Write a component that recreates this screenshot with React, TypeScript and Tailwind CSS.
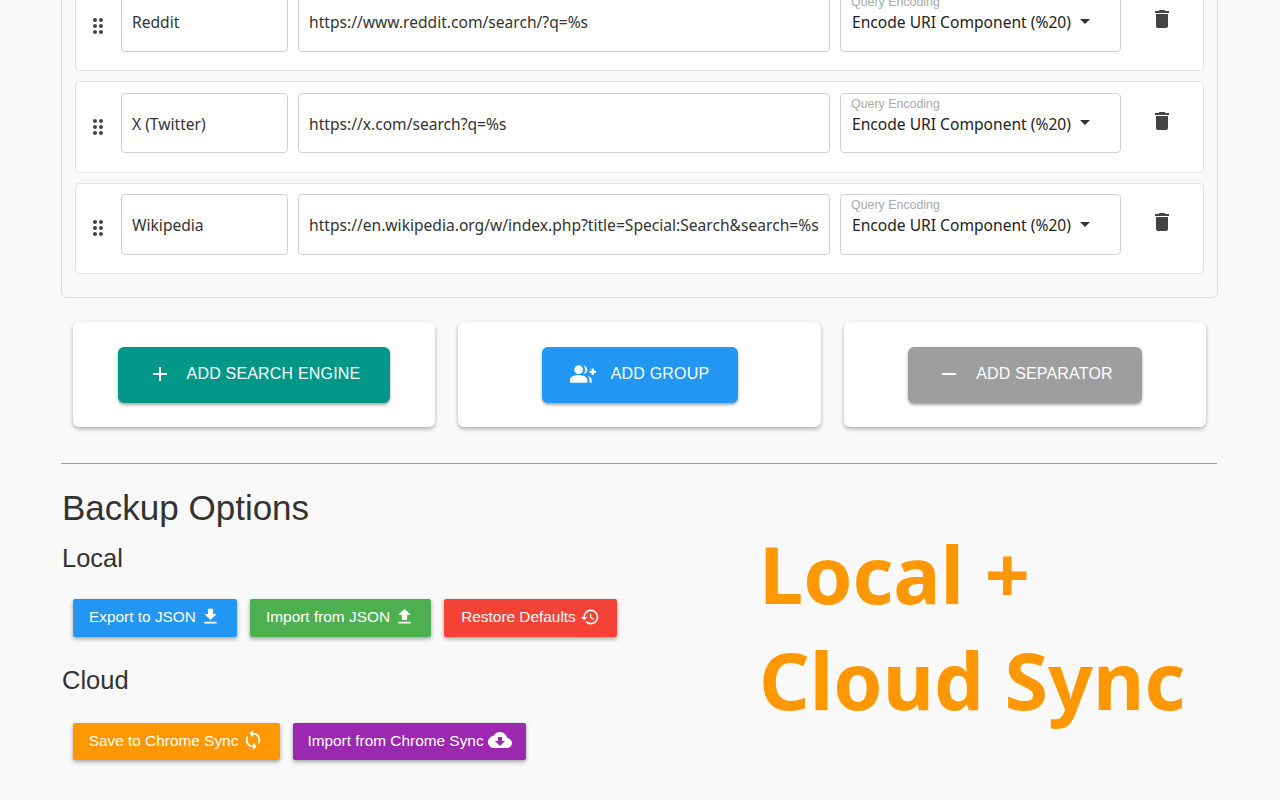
import React from "react";
import {
  MdAdd,
  MdCloudDownload,
  MdDelete,
  MdDragIndicator,
  MdFileDownload,
  MdFileUpload,
  MdGroupAdd,
  MdHistory,
  MdRemove,
  MdSync,
} from "react-icons/md";

const engines = [
  { name: "Reddit", url: "https://www.reddit.com/search/?q=%s" },
  { name: "X (Twitter)", url: "https://x.com/search?q=%s" },
  {
    name: "Wikipedia",
    url: "https://en.wikipedia.org/w/index.php?title=Special:Search&search=%s",
  },
];

const EngineRow = ({ name, url }: { name: string; url: string }) => (
  <div className="flex h-[91.4px] items-start rounded-[4px] border border-[#e4e4e4] bg-white pt-[10.5px] pl-[10px]">
    <div className="flex h-[60.5px] w-[35px] shrink-0 items-center pt-[8px]">
      <MdDragIndicator className="h-[24px] w-[24px] text-[#444]" />
    </div>
    <div className="flex h-[60.5px] w-[167px] shrink-0 items-center rounded-[4px] border border-[#d0d0d0] pt-[3.2px] pl-[10px] text-[15.6px] text-[#333]">
      {name}
    </div>
    <div className="ml-[10px] flex h-[60.5px] w-[532px] shrink-0 items-center rounded-[4px] border border-[#d0d0d0] pt-[3.2px] pl-[10px] text-[15.6px] whitespace-nowrap text-[#333]">
      {url}
    </div>
    <div className="ml-[10px] h-[60.5px] w-[281px] shrink-0 rounded-[4px] border border-[#d0d0d0] pt-[3px] pl-[10px]">
      <div className="font-['Liberation_Sans',sans-serif] text-[12.4px] leading-[14px] text-[#aaa]">Query Encoding</div>
      <div className="mt-[1px] flex items-center pl-[1px] text-[15.6px] leading-[24px] text-[#222]">
        Encode URI Component (%20)
        <span className="ml-[9px] h-0 w-0 -translate-y-[1px] border-x-[5.5px] border-t-[5.5px] border-x-transparent border-t-[#333]" />
      </div>
    </div>
    <MdDelete className="ml-[29px] mt-[15.9px] h-[24px] w-[24px] shrink-0 text-[#444]" />
  </div>
);

const AddCard = ({
  icon,
  label,
  color,
  width,
  className,
}: {
  icon: React.ReactNode;
  label: string;
  color: string;
  width: string;
  className: string;
}) => (
  <div className={`flex h-[105px] items-center justify-center rounded-[6px] bg-white shadow-[0_2px_4px_rgba(0,0,0,0.3)] ${className}`}>
    <div className={`flex h-[56px] items-center justify-center gap-[15px] rounded-[6px] pb-[2px] text-[16px] tracking-[0.18px] text-white shadow-[0_2px_3px_rgba(0,0,0,0.35)] ${color} ${width}`}>
      {icon}
      {label}
    </div>
  </div>
);

const SmallButton = ({
  label,
  icon,
  color,
  height,
  width,
}: {
  label: string;
  icon: React.ReactNode;
  color: string;
  height: string;
  width: string;
}) => (
  <div className={`flex items-center justify-center gap-[4px] rounded-[2px] pb-[2px] text-[15.4px] text-white shadow-[0_2px_4px_rgba(0,0,0,0.35)] ${color} ${height} ${width}`}>
    {label}
    {icon}
  </div>
);

export default function App() {
  return (
    <div className="h-[800px] w-[1280px] overflow-hidden bg-[#f9f9f9] pl-[61px] font-['Noto_Sans',sans-serif]">
      <div className="-mt-[32.2px] w-[1157px] rounded-[6px] border border-[#dcdcdc] px-[13px] pt-[11px] pb-[23px]">
        <div className="flex flex-col gap-[10px]">
          {engines.map((e) => (
            <EngineRow key={e.name} name={e.name} url={e.url} />
          ))}
        </div>
      </div>

      <div className="mt-[24.4px] ml-[12px] flex w-[1133px] justify-between font-['Liberation_Sans',sans-serif]">
        <AddCard
          className="w-[362px]"
          width="w-[272px]"
          color="bg-[#009688]"
          label="ADD SEARCH ENGINE"
          icon={<MdAdd className="h-[24px] w-[24px]" />}
        />
        <AddCard
          className="w-[363px]"
          width="w-[196px]"
          color="bg-[#2196f3]"
          label="ADD GROUP"
          icon={<MdGroupAdd className="h-[26px] w-[26px]" />}
        />
        <AddCard
          className="w-[362px]"
          width="w-[234px]"
          color="bg-[#9e9e9e]"
          label="ADD SEPARATOR"
          icon={<MdRemove className="h-[24px] w-[24px]" />}
        />
      </div>

      <hr className="mt-[35.6px] w-[1156px] border-t border-[#999]" />

      <div className="flex w-[1157px] font-['Liberation_Sans',sans-serif]">
        <div className="w-[698px]">
          <h2 className="mt-[20px] pl-[1px] text-[35px] leading-[48px] text-[#333]">Backup Options</h2>
          <h3 className="mt-[8px] pl-[1px] text-[25.5px] leading-[36px] text-[#333]">Local</h3>
          <div className="mt-[23px] ml-[12px] flex gap-[13px]">
            <SmallButton label="Export to JSON" color="bg-[#2196f3]" height="h-[38px]" width="w-[164px]" icon={<MdFileDownload className="h-[21px] w-[21px]" />} />
            <SmallButton label="Import from JSON" color="bg-[#4caf50]" height="h-[38px]" width="w-[181px]" icon={<MdFileUpload className="h-[21px] w-[21px]" />} />
            <SmallButton label="Restore Defaults" color="bg-[#f44336]" height="h-[38px]" width="w-[173px]" icon={<MdHistory className="h-[20px] w-[20px]" />} />
          </div>
          <h3 className="mt-[25px] pl-[1px] text-[25.5px] leading-[36px] text-[#333]">Cloud</h3>
          <div className="mt-[25px] ml-[12px] flex gap-[13px]">
            <SmallButton label="Save to Chrome Sync" color="bg-[#ff9800]" height="h-[37px]" width="w-[207px]" icon={<MdSync className="h-[22px] w-[22px]" />} />
            <SmallButton label="Import from Chrome Sync" color="bg-[#9c27b0]" height="h-[37px]" width="w-[233px]" icon={<MdCloudDownload className="h-[24px] w-[24px]" />} />
          </div>
        </div>
        <div className="mt-[57px] font-['Noto_Sans',sans-serif] text-[79px] leading-[106px] font-bold text-[#ff9800]">
          <div>Local +</div>
          <div className="whitespace-nowrap">Cloud Sync</div>
        </div>
      </div>
    </div>
  );
}
